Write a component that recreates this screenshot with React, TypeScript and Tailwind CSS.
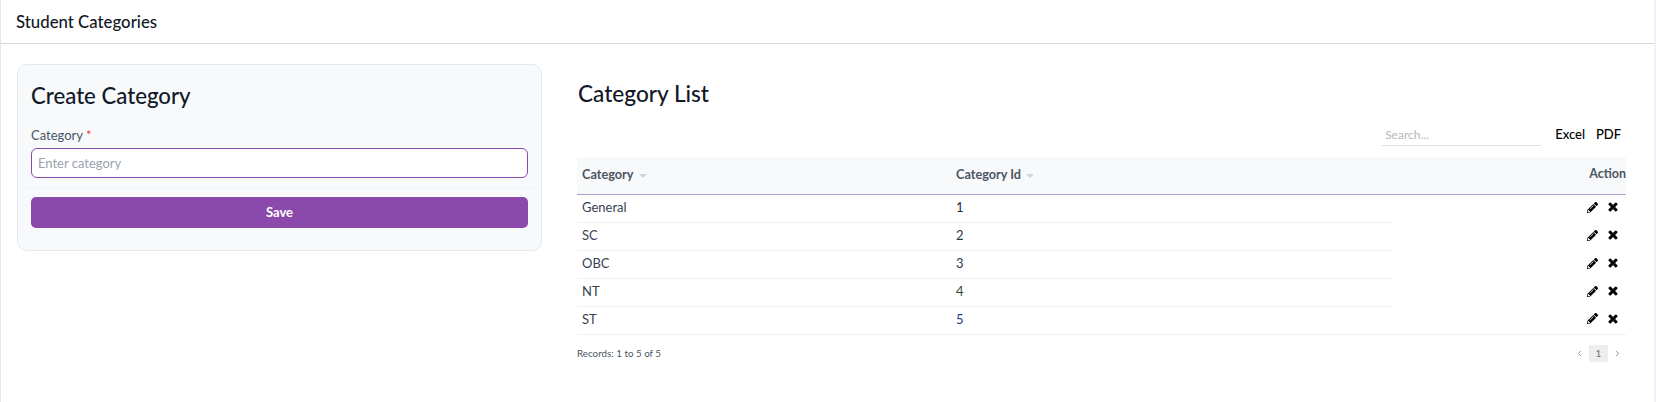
import { FaPencilAlt, FaTimes } from "react-icons/fa"
import { LuChevronLeft, LuChevronRight } from "react-icons/lu"

const rows = [
  { name: "General", id: 1, idColor: "text-[#1f2937]" },
  { name: "SC", id: 2, idColor: "text-[#1f3a4d]" },
  { name: "OBC", id: 3, idColor: "text-[#2b3a4d]" },
  { name: "NT", id: 4, idColor: "text-[#2f4a2f]" },
  { name: "ST", id: 5, idColor: "text-[#1e3a8a]" },
]

function Caret() {
  return <span className="ml-[5px] inline-block w-0 h-0 border-x-[4px] border-x-transparent border-t-[4px] border-t-[#d1d5db] translate-y-[-1px]"></span>
}

export default function App() {
  return (
    <div className="h-[402px] w-[1656px] bg-white font-['Lato','Open_Sans',sans-serif] flex overflow-hidden">
      <div className="w-[1654px] border-l border-[#e5e7eb] flex flex-col">
        <div className="h-[44px] border-b border-[#d1d8e0] flex items-center pl-[15px] text-[16.8px] font-medium text-[#111827]">Student Categories</div>

        <div className="flex pl-[16px] pt-[20px]">
          <div className="w-[525px] h-[187px] shrink-0 bg-[#f8f9fb] border border-[#e2e8f0] rounded-[10px] pt-[16px] px-[4px]">
            <div className="px-[9px] text-[22.2px] leading-[30px] font-medium text-[#111827]">Create Category</div>
            <div className="px-[9px] mt-[15px] text-[13px] leading-[18px] text-[#475569]">Category <span className="text-[#ef4444]">*</span></div>
            <div className="px-[9px] mt-[4px]">
              <input placeholder="Enter category" className="w-full h-[30px] bg-white border border-[#8a49ab] rounded-[6px] px-[6px] text-[13px] outline-none placeholder:text-[#9ca3af]" />
            </div>
            <div className="mt-[9px] border-t border-[#f1f3f5]"></div>
            <div className="px-[9px] mt-[9px]">
              <button className="w-full h-[31px] bg-[#8a49ab] rounded-[5px] text-white text-[13px] font-bold">Save</button>
            </div>
          </div>

          <div className="ml-[35px] w-[1049px] shrink-0">
            <div className="text-[22.6px] leading-[30px] font-medium text-[#111827] mt-[15px] ml-[1px]">Category List</div>
            <div className="flex justify-end items-start mt-[17px] h-[31px]">
              <div className="w-[159px] h-[20px] border-b border-[#dfdfdf] text-[12px] leading-[17px] pl-[3px] text-[#b4b8bf]">Search...</div>
              <div className="ml-[14px] text-[13px] leading-[17px] font-medium text-black">Excel</div>
              <div className="ml-[11px] mr-[6px] text-[13px] leading-[17px] font-medium text-black w-[24px]">PDF</div>
            </div>
            <table className="w-[1049px] table-fixed border-collapse text-[13px]">
              <thead>
                <tr className="h-[37px] bg-[#f8f9fb] border-b border-[#b39bcf] text-[#4b5563] text-left">
                  <th className="w-[373px] pl-[5px] pb-[2px] text-[12.7px] font-bold">Category<Caret /></th>
                  <th className="w-[442px] pl-[6px] pb-[2px] text-[12.7px] font-bold">Category Id<Caret /></th>
                  <th className="text-right pb-[2px] text-[12.5px] font-bold">Action</th>
                </tr>
              </thead>
              <tbody>
                {rows.map((r, i) => (
                  <tr key={r.name} className="h-[28px]">
                    <td className="pl-[5px] border-b border-[#f0f0f0] text-[#374151]">{r.name}</td>
                    <td className={`pl-[6px] border-b border-[#f0f0f0] ${r.idColor}`}>{r.id}</td>
                    <td className={i === rows.length - 1 ? "border-b border-[#f0f0f0]" : ""}>
                      <div className="flex justify-end items-center gap-[9px] pr-[7px] mb-[2px] text-black">
                        <FaPencilAlt size={11} />
                        <FaTimes size={12} stroke="currentColor" strokeWidth={40} />
                      </div>
                    </td>
                  </tr>
                ))}
              </tbody>
            </table>
            <div className="flex justify-between items-center mt-[10px] h-[17px]">
              <div className="text-[9.8px] text-[#4b5563]">Records: 1 to 5 of 5</div>
              <div className="flex items-center text-[#6b7280] text-[10px] pr-[4px]">
                <LuChevronLeft size={9} />
                <div className="w-[19px] h-[17px] mx-[5px] bg-[#eeeeee] flex items-center justify-center text-[#6b7280]">1</div>
                <LuChevronRight size={9} />
              </div>
            </div>
          </div>
        </div>
      </div>
      <div className="w-[2px] bg-[#f0f0f8]"></div>
    </div>
  )
}
